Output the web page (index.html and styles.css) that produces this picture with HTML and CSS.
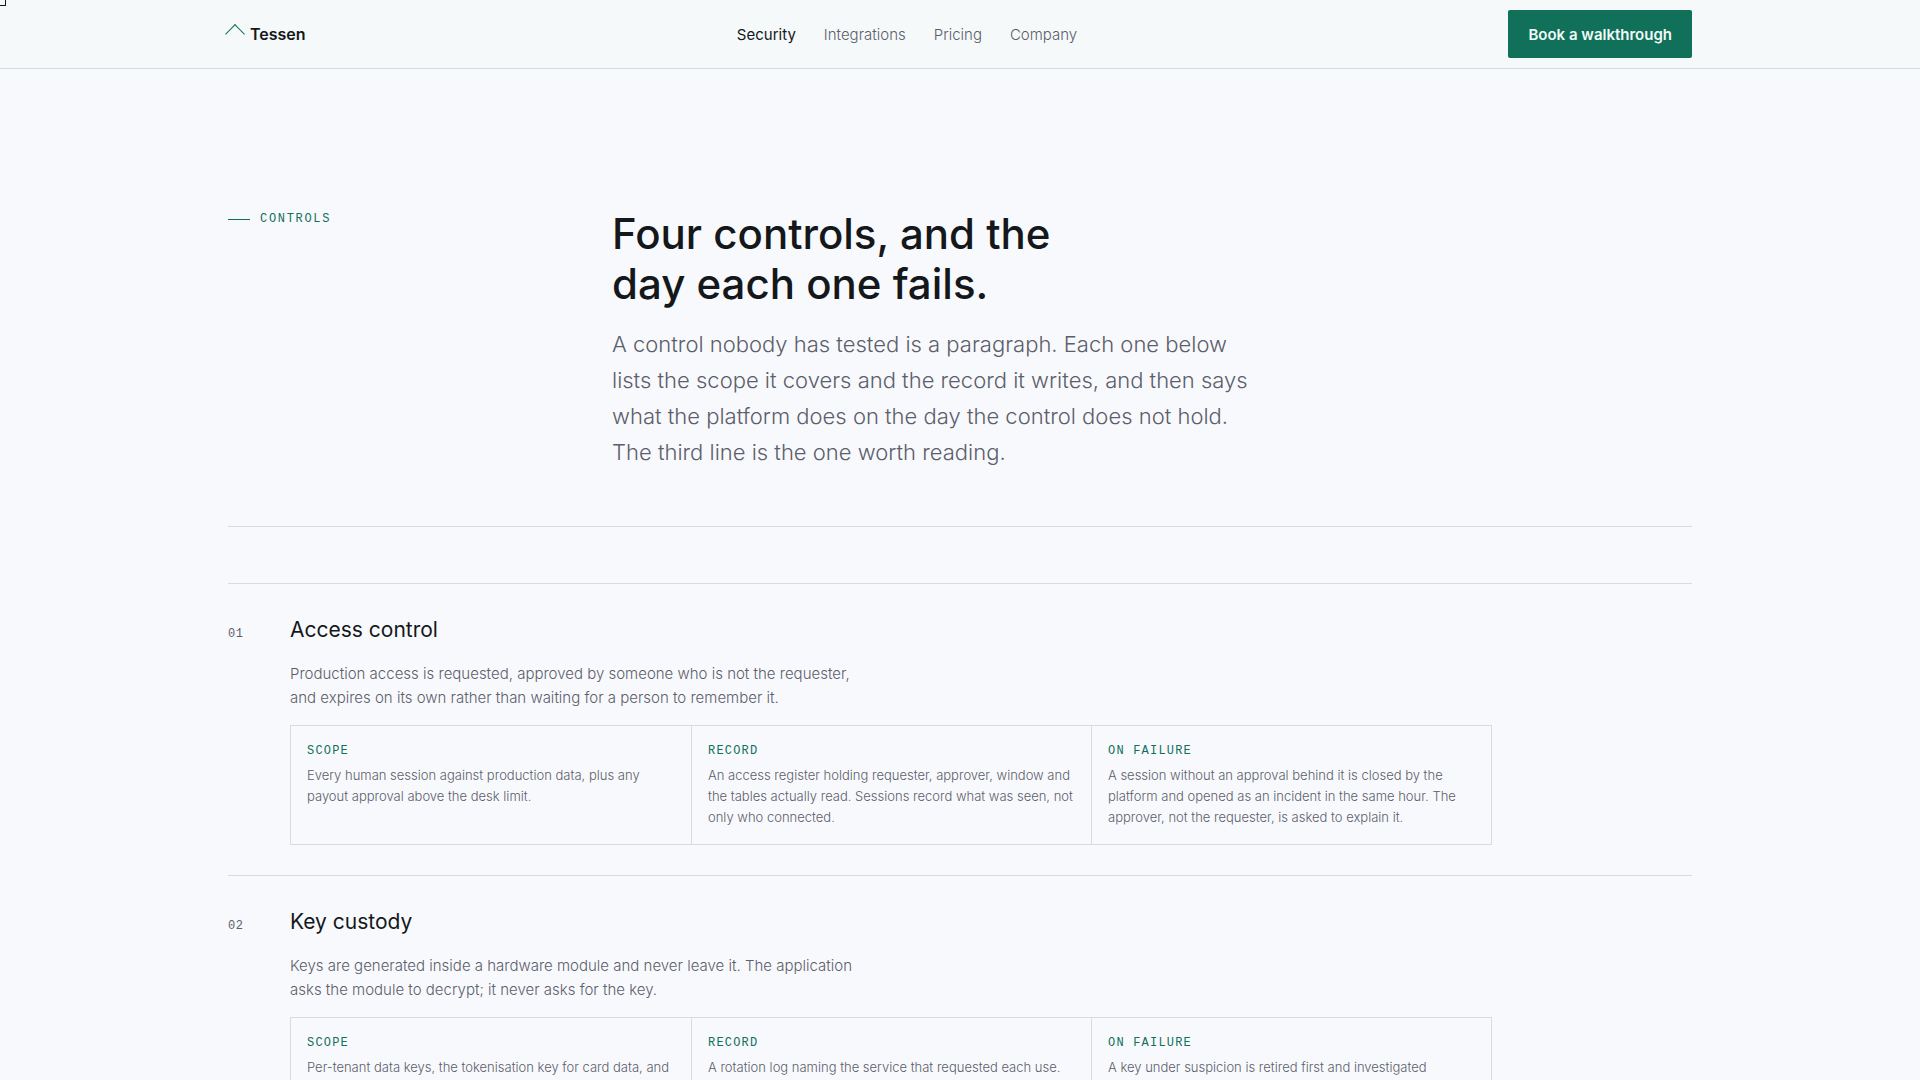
FILE: index.html
```html
<!DOCTYPE html>
<html lang="en">
<head>
<meta charset="utf-8">
<meta name="viewport" content="width=device-width, initial-scale=1">
<title>Security – Tessen</title>
<link rel="stylesheet" href="styles.css">
</head>
<body>
<a class="skip" href="#main" aria-label="Skip to content"></a>
<header class="header">
  <div class="wrap header-row">
    <a class="brand" href="#"><span class="brand-mark"></span>Tessen</a>
    <nav class="nav" aria-label="Main">
      <a class="nav-link is-current" href="#" aria-current="page">Security</a>
      <a class="nav-link" href="#">Integrations</a>
      <a class="nav-link" href="#">Pricing</a>
      <a class="nav-link" href="#">Company</a>
    </nav>
    <button class="button" type="button">Book a walkthrough</button>
  </div>
</header>
<main id="main" class="wrap">
  <section class="intro">
    <p class="eyebrow">CONTROLS</p>
    <div class="intro-copy">
      <h1 class="title">Four controls, and the<br>day each one fails.</h1>
      <p class="lead">A control nobody has tested is a paragraph. Each one below<br>lists the scope it covers and the record it writes, and then says<br>what the platform does on the day the control does not hold.<br>The third line is the one worth reading.</p>
    </div>
  </section>
  <section class="controls">
    <article class="control">
      <span class="number">01</span>
      <div class="control-body">
        <h2 class="control-title">Access control</h2>
        <p class="control-text">Production access is requested, approved by someone who is not the requester,<br>and expires on its own rather than waiting for a person to remember it.</p>
        <dl class="facts">
          <div class="fact"><dt class="fact-label">SCOPE</dt><dd class="fact-text">Every human session against production data, plus any<br>payout approval above the desk limit.</dd></div>
          <div class="fact"><dt class="fact-label">RECORD</dt><dd class="fact-text">An access register holding requester, approver, window and<br>the tables actually read. Sessions record what was seen, not<br>only who connected.</dd></div>
          <div class="fact"><dt class="fact-label">ON FAILURE</dt><dd class="fact-text">A session without an approval behind it is closed by the<br>platform and opened as an incident in the same hour. The<br>approver, not the requester, is asked to explain it.</dd></div>
        </dl>
      </div>
    </article>
    <article class="control">
      <span class="number">02</span>
      <div class="control-body">
        <h2 class="control-title">Key custody</h2>
        <p class="control-text">Keys are generated inside a hardware module and never leave it. The application<br>asks the module to decrypt; it never asks for the key.</p>
        <dl class="facts">
          <div class="fact"><dt class="fact-label">SCOPE</dt><dd class="fact-text">Per-tenant data keys, the tokenisation key for card data, and</dd></div>
          <div class="fact"><dt class="fact-label">RECORD</dt><dd class="fact-text">A rotation log naming the service that requested each use.</dd></div>
          <div class="fact"><dt class="fact-label">ON FAILURE</dt><dd class="fact-text">A key under suspicion is retired first and investigated</dd></div>
        </dl>
      </div>
    </article>
  </section>
</main>
</body>
</html>
```
FILE: styles.css
```css
:root {
  --ink: #14181b;
  --muted: #5c5e6b;
  --green: #11705a;
  --line: #d8dce1;
  --mono: "Liberation Mono", monospace;
}
* { box-sizing: border-box; }
html { overflow-x: hidden; }
body {
  margin: 0;
  background: #f8f9fd;
  color: var(--ink);
  font-family: Inter, "Noto Sans", sans-serif;
  font-size: 15px;
  font-weight: 300;
}
h1, h2, p, dl, dd { margin: 0; }
a { color: inherit; text-decoration: none; }
.wrap {
  width: calc(100% - 48px);
  max-width: 1464px;
  margin: 0 auto;
}
.skip {
  position: absolute;
  top: 0;
  left: 0;
  width: 1px;
  height: 1px;
  outline: 1px solid var(--ink);
  outline-offset: 4px;
}
.header {
  background: #f5f9fa;
  border-bottom: 1px solid var(--line);
}
.header-row {
  display: flex;
  justify-content: space-between;
  align-items: center;
  min-height: 68px;
}
.brand {
  display: flex;
  align-items: center;
  gap: 8px;
  font-size: 16px;
  font-weight: 600;
}
.brand-mark {
  width: 14px;
  height: 14px;
  border: solid var(--green);
  border-width: 1px 0 0 1px;
  transform: rotate(45deg);
}
.nav { display: flex; gap: 28px; }
.nav-link { color: var(--muted); }
.nav-link.is-current { color: var(--ink); font-weight: 400; }
.button {
  height: 48px;
  padding: 0 20px;
  border: 0;
  border-radius: 2px;
  background: var(--green);
  color: #f0faf8;
  font: 600 15px Inter, sans-serif;
}
.intro {
  display: grid;
  grid-template-columns: 384px 1fr;
  padding: 140px 0 56px;
  border-bottom: 1px solid var(--line);
}
.eyebrow {
  display: flex;
  align-items: center;
  align-self: start;
  gap: 10px;
  color: var(--green);
  font: 12px/20px var(--mono);
  letter-spacing: 0.14em;
}
.eyebrow::before {
  content: "";
  width: 22px;
  height: 1px;
  background: currentColor;
}
.title {
  font-size: 42px;
  font-weight: 500;
  line-height: 50px;
}
.lead {
  margin-top: 17px;
  color: var(--muted);
  font-size: 22px;
  line-height: 36px;
}
.controls { padding-top: 56px; }
.control {
  display: grid;
  grid-template-columns: 62px minmax(0, 1202px);
  padding: 28px 0 30px;
  border-top: 1px solid var(--line);
}
.number {
  padding-top: 12px;
  color: var(--muted);
  font: 12px/20px var(--mono);
  letter-spacing: 0.05em;
}
.control-title {
  font-size: 21px;
  font-weight: 400;
  line-height: 36px;
}
.control-text {
  margin-top: 14px;
  color: var(--muted);
  line-height: 24px;
}
.facts {
  display: grid;
  grid-template-columns: repeat(3, minmax(0, 1fr));
  margin-top: 15px;
  border: 1px solid var(--line);
}
.fact { padding: 15px 16px 16px; }
.fact + .fact { border-left: 1px solid var(--line); }
.fact-label {
  color: var(--green);
  font: 12px/20px var(--mono);
  letter-spacing: 0.1em;
}
.fact-text {
  margin-top: 4px;
  color: var(--muted);
  font-size: 13px;
  line-height: 21px;
  white-space: nowrap;
}
```
